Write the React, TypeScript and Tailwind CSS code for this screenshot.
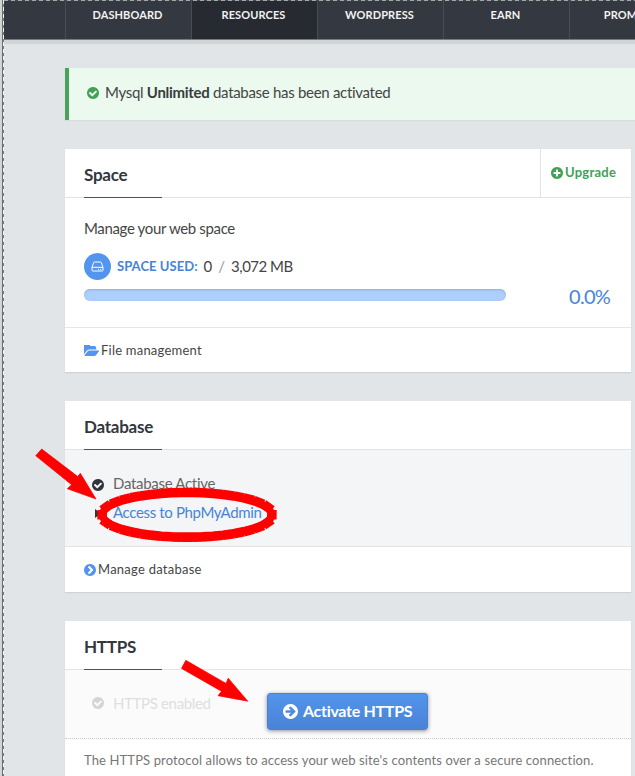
import type { ReactNode } from "react";

const DISC =
  "M1664 896q0 209-103 385.5t-279.5 279.5-385.5 103-385.5-103-279.5-279.5-103-385.5 103-385.5 279.5-279.5 385.5-103 385.5 103 279.5 279.5 103 385.5z";
const GLYPHS = {
  check:
    "M1412 734q0-28-18-46l-91-90q-19-19-45-19t-45 19l-408 407-226-226q-19-19-45-19t-45 19l-91 90q-18 18-18 46 0 27 18 45l362 362q19 19 45 19 27 0 46-19l543-543q18-18 18-45z",
  plus: "M1344 960v-128q0-26-19-45t-45-19h-256v-256q0-26-19-45t-45-19h-128q-26 0-45 19t-19 45v256h-256q-26 0-45 19t-19 45v128q0 26 19 45t45 19h256v256q0 26 19 45t45 19h128q26 0 45-19t19-45v-256h256q26 0 45-19t19-45z",
  chevron:
    "M845 1395l454-454q19-19 19-45t-19-45l-454-454q-19-19-45-19t-45 19l-102 102q-19 19-19 45t19 45l307 307-307 307q-19 19-19 45t19 45l102 102q19 19 45 19t45-19z",
  arrow:
    "M1413 896q0-27-18-45l-362-362-91-91q-18-18-45-18t-45 18l-91 91q-18 18-18 45t18 45l189 189h-502q-26 0-45 19t-19 45v128q0 26 19 45t45 19h502l-189 189q-19 19-19 45t19 45l91 91q18 18 45 18t45-18l362-362 91-91q18-18 18-45z",
};

// Hand-drawn style ring: straight strokes of equal length laid round an ellipse.
function ringPath(cx: number, cy: number, rx: number, ry: number, count: number) {
  const steps = 3600;
  const points: [number, number][] = [];
  const lengths: number[] = [0];
  for (let i = 0; i <= steps; i++) {
    const a = (i / steps) * Math.PI * 2;
    points.push([cx + rx * Math.cos(a), cy + ry * Math.sin(a)]);
    if (i > 0) {
      lengths.push(lengths[i - 1] + Math.hypot(points[i][0] - points[i - 1][0], points[i][1] - points[i - 1][1]));
    }
  }
  const total = lengths[steps];
  const at = (k: number) => {
    const wanted = (((k + count) % count) / count) * total;
    const [x, y] = points[lengths.findIndex((l) => l >= wanted)];
    return `${x.toFixed(2)} ${y.toFixed(2)}`;
  };
  return Array.from({ length: count }, (_, k) => `M${at(k - 0.5)}L${at(k + 0.5)}`).join("");
}
const RING = ringPath(187, 514.8, 86.8, 22.4, 36);

function Disc({ glyph, className }: { glyph: keyof typeof GLYPHS; className: string }) {
  return (
    <svg viewBox="128 128 1536 1536" className={`shrink-0 ${className}`} fill="currentColor" fillRule="evenodd">
      <path d={`${DISC}${GLYPHS[glyph]}`} />
    </svg>
  );
}

function Card({ title, action, className, children }: { title: string; action?: ReactNode; className: string; children: ReactNode }) {
  return (
    <section className={`w-[566px] bg-white shadow-[0_1px_1px_#cfd3d7] ${className}`}>
      <header className="flex h-[49px] justify-between border-b border-[#e1e3e5]">
        <div className="ml-[19px] flex h-[49px] w-[78px] items-center border-b border-[#4c535d] pt-[3px]">
          <h2 className="text-[17px] font-bold tracking-[-0.25px] text-[#33373d]">{title}</h2>
        </div>
        {action}
      </header>
      {children}
    </section>
  );
}

const tabs = ["DASHBOARD", "RESOURCES", "WORDPRESS", "EARN", "PROMOTE"];

export default function App() {
  return (
    <div className="relative flex h-[776px] w-[635px] overflow-hidden bg-[#e1e5e8] font-[Lato,sans-serif] whitespace-nowrap text-[#454545]">
      <div className="w-[4px] shrink-0 border-l-2 border-[#d3d5d4] bg-[#696e70]">
        <div className="ml-px h-full bg-[repeating-linear-gradient(#f3f4f4_0px,#f3f4f4_4px,#777b7e_4px,#777b7e_7px)]" />
      </div>
      <div className="min-w-0 flex-1">
        <div className="h-px bg-[repeating-linear-gradient(90deg,#a5a8aa_0px,#a5a8aa_4px,#45494e_4px,#45494e_7px)]" />
        <nav className="flex h-[39px] border-b border-[#777b82] bg-[#343840] pl-[61px]">
          {tabs.map((tab) => (
            <div
              key={tab}
              className={`flex w-[126px] shrink-0 justify-center border-l border-[#484c54] pt-[7px] pr-[2px] text-[11px] leading-[14px] font-bold tracking-[0.1px] text-[#f2f2f2] ${tab === "RESOURCES" ? "bg-[#272a31]" : ""}`}
            >
              {tab}
            </div>
          ))}
        </nav>
        <div className="h-[4px] bg-[#d1d5d8]" />
        <main className="flex flex-col pt-[24px] pl-[61px]">
          <div className="flex h-[52px] items-center border-l-4 border-[#48a35a] bg-[#ebf9ef] pb-[2px] pl-[18px] text-[15px] shadow-[0_1px_1px_#d6dbdb]">
            <Disc glyph="check" className="mr-[6px] h-3 w-3 text-[#43a057]" />
            <span className="pb-px tracking-[-0.3px]">Mysql <b className="text-[#383c3e]">Unlimited</b> database has been activated</span>
          </div>

          <Card
            title="Space"
            className="mt-[29px] h-[223px]"
            action={
              <div className="flex w-[91px] items-center gap-[2px] border-l border-[#e1e3e5] pl-[10px] text-[13px] font-bold tracking-[0.25px] text-[#43a057]">
                <Disc glyph="plus" className="h-3 w-3" />
                Upgrade
              </div>
            }
          >
            <div className="h-[130px] border-b border-[#e4e6e8] pt-[19px] pl-[19px]">
              <p className="text-[15px] leading-[22px] tracking-[-0.35px]">Manage your web space</p>
              <div className="mt-[14px] flex h-[27px] items-center">
                <span className="flex h-[27px] w-[27px] items-center justify-center rounded-full bg-[#5294ee]">
                  <svg className="h-[11px] w-[13px]" viewBox="0 0 13 11" fill="none" stroke="#fff" strokeWidth="1">
                    <path d="M1 6.3 2.6 1.7Q2.8 1 3.6 1h5.8q.8 0 1 .7L12 6.3v2.9q0 .8-.8.8H1.8Q1 10 1 9.2V6.3ZM1 6.3h11" />
                    <path d="M7 8.3h1m1 0h1.2" />
                  </svg>
                </span>
                <span className="ml-[6px] text-[13px] font-bold tracking-[0.05px] text-[#4784d7]">SPACE USED:</span>
                <span className="ml-[6px] text-[15px]">0</span>
                <span className="ml-[6px] text-[15px] text-[#999]">/</span>
                <span className="ml-[6px] text-[15px] tracking-[-0.5px]">3,072 MB</span>
              </div>
              <div className="mt-[5px] flex h-[24px]">
                <div className="mt-[4px] h-[12px] w-[422px] rounded-full bg-[#adcffc] shadow-[inset_0_1px_2px_#91afd7]" />
                <span className="ml-[63px] text-[20px] leading-[22px] tracking-[-0.7px] text-[#4784d7]">0.0%</span>
              </div>
            </div>
            <div className="flex h-[44px] items-center gap-[2px] pt-px pl-[19px] text-[13px] tracking-[0.22px]">
              <svg viewBox="0 256 1879 1280" preserveAspectRatio="none" className="h-[11px] w-[15px]" fill="#5294ee">
                <path d="M1879 952q0 31-31 66l-336 396q-43 51-120.5 86.5t-143.5 35.5h-1088q-34 0-60.5-13t-26.5-43q0-31 31-66l336-396q43-51 120.5-86.5t143.5-35.5h1088q34 0 60.5 13t26.5 43zm-343-344v160h-832q-94 0-197 47.5t-164 119.5l-337 396-5 6q0-4-.5-12.5t-.5-12.5v-960q0-92 66-158t158-66h320q92 0 158 66t66 158v32h544q92 0 158 66t66 158z" />
              </svg>
              File management
            </div>
          </Card>

          <Card title="Database" className="mt-[29px] h-[191px]">
            <div className="h-[97px] border-b border-[#e1e3e5] bg-[#f4f5f7] pt-[20px] pl-[27px] text-[15px] tracking-[-0.3px]">
              <div className="flex h-[29px] items-center text-[#666]">
                <Disc glyph="check" className="mr-[9px] h-3 w-3 text-[#30343b]" />
                <span className="pb-[3px]">Database Active</span>
              </div>
              <div className="flex h-[29px] items-center text-[#4784d7]">
                <svg viewBox="0 0 6 9" className="mr-[12px] ml-[3px] h-[9px] w-[6px]" fill="#30343b"><path d="M0 0 6 4.5 0 9Z" /></svg>
                <span className="pb-[3px] tracking-[-0.35px]">Access to PhpMyAdmin</span>
              </div>
            </div>
            <div className="flex h-[45px] items-center gap-[2px] pl-[19px] text-[13px] tracking-[0.25px]">
              <Disc glyph="chevron" className="h-3 w-3 text-[#5294ee]" />
              Manage database
            </div>
          </Card>

          <Card title="HTTPS" className="mt-[29px] h-[180px]">
            <div className="flex h-[69px] border-b border-dotted border-[#c9cbcd] bg-[#fbfbfb] pl-[27px]">
              <div className="flex h-[66px] w-[175px] items-center text-[15px] tracking-[-0.35px] text-[#dedfe0]">
                <Disc glyph="check" className="mr-[9px] h-3 w-3 text-[#d4d5d6]" />
                HTTPS enabled
              </div>
              <button className="mt-[23px] flex h-[37px] w-[161px] items-center rounded-[3px] border border-[#4c82ce] bg-linear-to-b from-[#5294ec] to-[#4983d6] pl-[15px] text-[16px] font-bold tracking-[-0.3px] text-white shadow-[0_1px_4px_#8b9199]">
                <Disc glyph="arrow" className="mr-[5px] h-[15px] w-[15px]" />
                <span className="pb-px">Activate HTTPS</span>
              </button>
            </div>
            <p className="pt-[10px] pl-[19px] text-[13px] leading-[22px] tracking-[0.12px] text-[#777]">
              The HTTPS protocol allows to access your web site's contents over a secure connection.
            </p>
          </Card>
        </main>
      </div>

      <svg className="absolute inset-0 h-[776px] w-[635px]" viewBox="0 0 635 776" fill="#fe0000" stroke="#fe0000">
        <path strokeWidth="0.7" d="M41.7 449 77.8 476.6 80.3 473.3 96 499 67.3 488.7 71.6 484.7 35.7 455.7Z" />
        <path strokeWidth="0.7" d="M185.8 660.3 226 683.4 228.2 678.2 247.8 701.2 218 695.7 221.5 691.3 181.5 668.4Z" />
        <ellipse cx="187" cy="514.8" rx="84.6" ry="22.2" fill="none" strokeWidth="7.5" />
        <path d={RING} fill="none" strokeWidth="9.6" />
      </svg>
    </div>
  );
}
